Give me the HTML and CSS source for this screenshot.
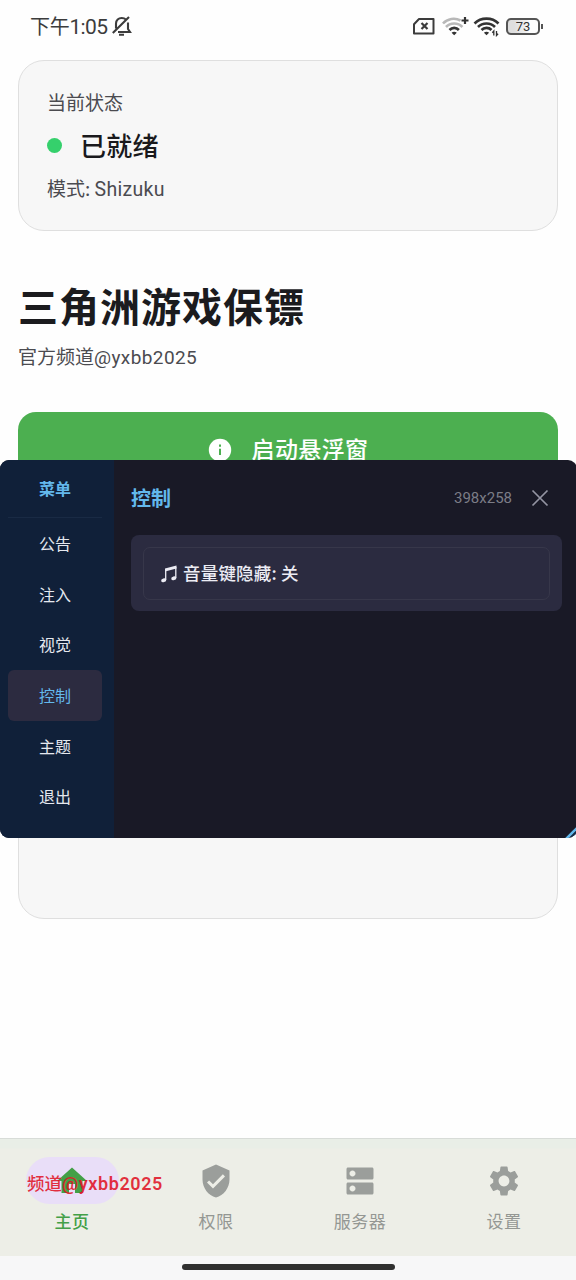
FILE: index.html
```html
<!DOCTYPE html>
<html lang="zh-CN">
<head>
<meta charset="utf-8">
<title>三角洲游戏保镖</title>
<link rel="stylesheet" href="styles.css">
</head>
<body>
<div class="screen">
  <header class="status-bar">
    <span class="clock">下午<span class="latin">1:05</span></span>
    <svg class="bell" width="20" height="22" viewBox="0 0 20 22" fill="none" stroke="#3c3c3c" stroke-width="2.1"><path d="M4 13.500V8.500C4 5 6.500 3 9.700 3c1.800 0 3.200.6 4.200 1.600M16 7.500v6.500l2 3H6M.8 18 17 2M7 19.800h5"/></svg>
    <div class="status-icons">
      <svg width="132" height="24" viewBox="0 0 132 24" fill="none">
        <path d="M2 11.200 7 6h14.500v14.500H2Z" stroke="#3c3c3c" stroke-width="2" stroke-linejoin="round"/>
        <path d="m9.500 10 6 6m0-6-6 6" stroke="#3c3c3c" stroke-width="2.200"/>
        <g stroke-width="2.600">
          <path d="M31 10.500C35.500 5.500 43 4.500 48.500 7.500" stroke="#b8b8b8"/>
          <path d="M34 14c4.300-4.600 12-4.600 16.400 0" stroke="#b8b8b8"/>
          <path d="M37.500 17c2.600-2.800 6.800-2.800 9.400 0" stroke="#333"/>
          <path d="M49.500 7.500h7M53 4v7" stroke="#333" stroke-width="2.200"/>
          <path d="M62.500 10.500c6.500-6.500 17.500-6.500 24 0M66 14c4.500-4.600 12.500-4.600 17 0M69.500 17c2.600-2.800 7.300-2.800 10 0" stroke="#333"/>
        </g>
        <path d="m42.200 22.300-2.600-2.600c1.400-1.300 3.800-1.300 5.200 0ZM74.500 22.300l-2.600-2.600c1.400-1.300 3.800-1.300 5.200 0Z" fill="#333"/>
        <path d="M81.800 22.500v-4.500l-1.500 1.700M84.500 18V22.500l1.600-1.700" stroke="#333" stroke-width="1.300"/>
      </svg>
      <span class="battery"><span class="battery-level">73</span></span>
    </div>
  </header>

  <main class="content">
    <section class="card state-card">
      <p class="label">当前状态</p>
      <div class="state"><span class="dot"></span><span class="state-text">已就绪</span></div>
      <p class="label mode">模式: <span class="latin">Shizuku</span></p>
    </section>
    <h1 class="title">三角洲游戏保镖</h1>
    <p class="subtitle">官方频道<span class="latin">@yxbb2025</span></p>
    <button class="start">
      <svg width="24" height="24" viewBox="0 0 24 24"><circle cx="12" cy="12" r="11.200" fill="#fff"/><path d="M12 6.500v2.200M12 10.800V17" stroke="#4caf50" stroke-width="2"/></svg>
      <span class="start-text">启动悬浮窗</span>
    </button>
    <section class="card lower-card"></section>
  </main>

  <nav class="tabs">
    <a class="tab active">
      <span class="tab-icon"><svg width="36" height="36" viewBox="0 0 24 24" fill="#43a047"><path d="M10 20v-6h4v6h5v-8h3L12 3 2 12h3v8z"/></svg></span>
      <span>主页</span>
    </a>
    <a class="tab">
      <span class="tab-icon"><svg width="36" height="36" viewBox="0 0 24 24" fill="#9b9e9b"><path d="M12 1 3 5v6c0 5.550 3.840 10.740 9 12 5.160-1.260 9-6.450 9-12V5zm-2 16-4-4 1.410-1.410L10 14.170l6.590-6.590L18 9z"/></svg></span>
      <span>权限</span>
    </a>
    <a class="tab">
      <span class="tab-icon"><svg width="36" height="36" viewBox="0 0 24 24" fill="#9b9e9b"><path d="M20 13H4c-.550 0-1 .450-1 1v6c0 .550.450 1 1 1h16c.550 0 1-.450 1-1v-6c0-.550-.450-1-1-1M7 19c-1.100 0-2-.900-2-2s.900-2 2-2 2 .900 2 2-.900 2-2 2M20 3H4c-.550 0-1 .450-1 1v6c0 .550.450 1 1 1h16c.550 0 1-.450 1-1V4c0-.550-.450-1-1-1M7 9c-1.100 0-2-.900-2-2s.900-2 2-2 2 .900 2 2-.900 2-2 2"/></svg></span>
      <span>服务器</span>
    </a>
    <a class="tab">
      <span class="tab-icon"><svg width="36" height="36" viewBox="0 0 24 24" fill="#9b9e9b"><path d="M19.140 12.940c.040-.300.060-.610.060-.940 0-.320-.020-.640-.070-.940l2.030-1.580c.180-.140.230-.410.120-.610l-1.920-3.320c-.120-.220-.370-.290-.590-.220l-2.390.960c-.500-.380-1.030-.700-1.620-.940l-.360-2.540c-.040-.240-.240-.410-.480-.410h-3.840c-.240 0-.430.170-.470.410l-.360 2.540c-.590.240-1.130.570-1.620.940l-2.390-.960c-.220-.080-.470 0-.590.220L2.740 8.870c-.120.210-.080.470.120.610l2.030 1.580c-.050.300-.090.630-.090.940s.020.640.070.940l-2.030 1.580c-.180.140-.230.410-.120.610l1.920 3.320c.120.220.370.290.590.220l2.390-.960c.500.380 1.030.700 1.620.940l.360 2.540c.050.240.240.410.480.410h3.840c.240 0 .440-.170.470-.410l.360-2.540c.590-.240 1.130-.560 1.620-.940l2.390.960c.220.080.470 0 .590-.220l1.920-3.320c.120-.220.070-.470-.120-.610zM12 15.600c-1.980 0-3.600-1.620-3.600-3.600s1.620-3.600 3.600-3.600 3.600 1.620 3.600 3.600-1.620 3.600-3.600 3.600"/></svg></span>
      <span>设置</span>
    </a>
  </nav>
  <div class="gesture"><span class="handle"></span></div>

  <div class="panel">
    <aside class="menu">
      <div class="menu-title">菜单</div>
      <div class="menu-item">公告</div>
      <div class="menu-item">注入</div>
      <div class="menu-item">视觉</div>
      <div class="menu-item selected">控制</div>
      <div class="menu-item">主题</div>
      <div class="menu-item">退出</div>
    </aside>
    <div class="pane">
      <div class="pane-head">
        <span class="pane-title">控制</span>
        <span class="size">398x258</span>
        <svg width="18" height="18" viewBox="0 0 18 18" stroke="#9394a2" stroke-width="1.700"><path d="m1.500 1.500 15 15m0-15-15 15"/></svg>
      </div>
      <div class="group">
        <div class="option">
          <svg width="18" height="20" viewBox="0 0 18 20" fill="#ececf4"><path d="M5 4.500 16.500 1.500v3L5 7.500Z"/><path d="M5.700 5v11M15.800 3v11" stroke="#ececf4" stroke-width="1.300"/><ellipse cx="3.700" cy="16.300" rx="2.600" ry="1.800" transform="rotate(-15 3.700 16.300)"/><ellipse cx="13.800" cy="14.300" rx="2.600" ry="1.800" transform="rotate(-15 13.800 14.300)"/></svg>
          <span class="option-text">音量键隐藏: 关</span>
        </div>
      </div>
    </div>
    <svg class="resize" width="12" height="12" viewBox="0 0 12 12" stroke="#63b8ec" stroke-width="2.600"><path d="M2 13 14 1"/><path d="M6 14 14 6" stroke="#17395b" stroke-width="3"/></svg>
  </div>
  <div class="watermark">频道<span class="latin">@yxbb2025</span></div>
</div>
</body>
</html>
```
FILE: styles.css
```css
* { box-sizing: border-box; }
body {
  margin: 0;
  background: #fefefe;
  font-family: "Noto Sans CJK SC", "Noto Sans", sans-serif;
}
p, h1 { margin: 0; }
svg { display: block; flex: none; }
.latin { font-family: Roboto, sans-serif; letter-spacing: 0.3px; line-height: 1; }
.screen {
  position: relative;
  width: 576px;
  height: 1280px;
  display: flex;
  flex-direction: column;
  overflow: hidden;
}
.status-bar {
  height: 60px;
  flex: none;
  display: flex;
  align-items: flex-start;
  padding: 14px 33px 0 30px;
  color: #3c3c3c;
}
.clock { width: 82px; font-size: 20px; line-height: 24px; font-weight: 400; letter-spacing: -0.3px; white-space: nowrap; }
.clock .latin { font-size: 21px; letter-spacing: -0.6px; }
.bell { margin-top: 1px; }
.status-icons { margin-left: auto; display: flex; align-items: flex-start; }
.status-icons svg { margin-right: -38px; margin-top: -1px; }
.battery {
  position: relative;
  width: 34px;
  height: 17px;
  margin: 4px 3px 0 0;
  border: 2px solid #555;
  border-radius: 5px;
  background: linear-gradient(90deg, #dedede 20%, #f0f0f0 60%, #fefefe 72%);
}
.battery::after {
  content: "";
  position: absolute;
  right: -5px;
  top: 4px;
  width: 2px;
  height: 5px;
  background: #555;
}
.battery-level { display: block; text-align: center; font: 400 13px/14px Roboto, sans-serif; color: #333; }
.content { flex: 1; padding: 0 18px; }
.card { background: #f7f7f7; border: 1.500px solid #dfdfdf; border-radius: 26px; }
.state-card { height: 171px; padding: 27px 28px 0; }
.label, .subtitle { font-size: 19px; line-height: 28px; color: #4b4b50; font-weight: 400; }
.label .latin { font-size: 19.500px; }
.state { display: flex; align-items: center; height: 58px; gap: 18px; }
.dot { width: 15px; height: 15px; border-radius: 50%; background: #35d06c; }
.state-text { font-size: 26px; line-height: 36px; font-weight: 500; letter-spacing: 0.2px; color: #19191c; }
.title { margin-top: 45px; font-size: 40px; line-height: 58px; font-weight: 700; letter-spacing: 1px; color: #1b1b1e; }
.subtitle { margin-top: 8px; }
.subtitle .latin { letter-spacing: 0.4px; }
.start {
  width: 100%;
  height: 76px;
  margin-top: 42px;
  border: 0;
  border-radius: 18px;
  background: #4caf50;
  color: #fff;
  display: flex;
  justify-content: center;
  align-items: center;
  gap: 20px;
  font: 500 23px/34px "Noto Sans CJK SC", sans-serif;
  letter-spacing: 0.4px;
}
.start-text { padding-bottom: 4px; }
.lower-card { height: 390px; margin-top: 41px; }
.tabs {
  height: 118px;
  flex: none;
  display: grid;
  grid-template-columns: repeat(4, 1fr);
  border-top: 1px solid #d8dcd8;
  background: linear-gradient(#e9eee7 0 9px, #edeee7 10px);
}
.tab {
  display: flex;
  flex-direction: column;
  align-items: center;
  padding-top: 18px;
  gap: 4px;
  color: #949793;
  font-size: 17px;
  line-height: 26px;
  font-weight: 400;
  letter-spacing: 0.5px;
}
.tab-icon { width: 93px; height: 47px; border-radius: 24px; display: grid; place-items: center; }
.active { color: #43a047; font-weight: 500; }
.active .tab-icon { background: #e9def8; }
.gesture { height: 24px; flex: none; background: #f7f7f8; padding-top: 8px; }
.handle { display: block; width: 213px; height: 6px; margin: 0 auto; border-radius: 3px; background: #303030; }
.panel {
  position: absolute;
  left: 0;
  top: 460px;
  width: 577px;
  height: 378px;
  display: flex;
  overflow: hidden;
  border-radius: 9px;
  background: #191926;
}
.menu { width: 114px; padding: 0 12px 0 8px; background: #102039; color: #e5e8ef; font-size: 16px; text-align: center; }
.menu-title { height: 58px; line-height: 57px; border-bottom: 1px solid #192a44; color: #63b8ec; font-weight: 700; }
.menu-item { height: 50.700px; line-height: 50px; border-radius: 6px; }
.selected { background: #2c2b40; color: #63b8ec; }
.pane { flex: 1; padding: 19px 15px 0 17px; }
.pane-head { height: 37px; display: flex; align-items: center; padding-right: 13px; }
.pane-title { flex: 1; color: #63b8ec; font-size: 20px; font-weight: 700; }
.size { margin-right: 19px; font: 400 15px/20px Roboto, sans-serif; color: #7c7d87; }
.group { height: 76px; margin-top: 19px; padding: 12px 12px 11px; border-radius: 8px; background: #2b2b40; }
.option {
  height: 53px;
  display: flex;
  align-items: center;
  gap: 5px;
  padding-left: 16px;
  border: 1px solid #37374a;
  border-radius: 7px;
  color: #ececf4;
  font-size: 17.500px;
  font-weight: 500;
}
.option-text { padding-bottom: 2px; letter-spacing: 0.2px; }
.resize { position: absolute; right: 1px; bottom: 0; }
.watermark {
  position: absolute;
  left: 27px;
  top: 1170px;
  font-size: 17.500px;
  line-height: 26px;
  font-weight: 500;
  color: rgba(224, 20, 38, 0.88);
  white-space: nowrap;
}
.watermark .latin { font-size: 18px; font-weight: 600; letter-spacing: 0.600px; }
```
